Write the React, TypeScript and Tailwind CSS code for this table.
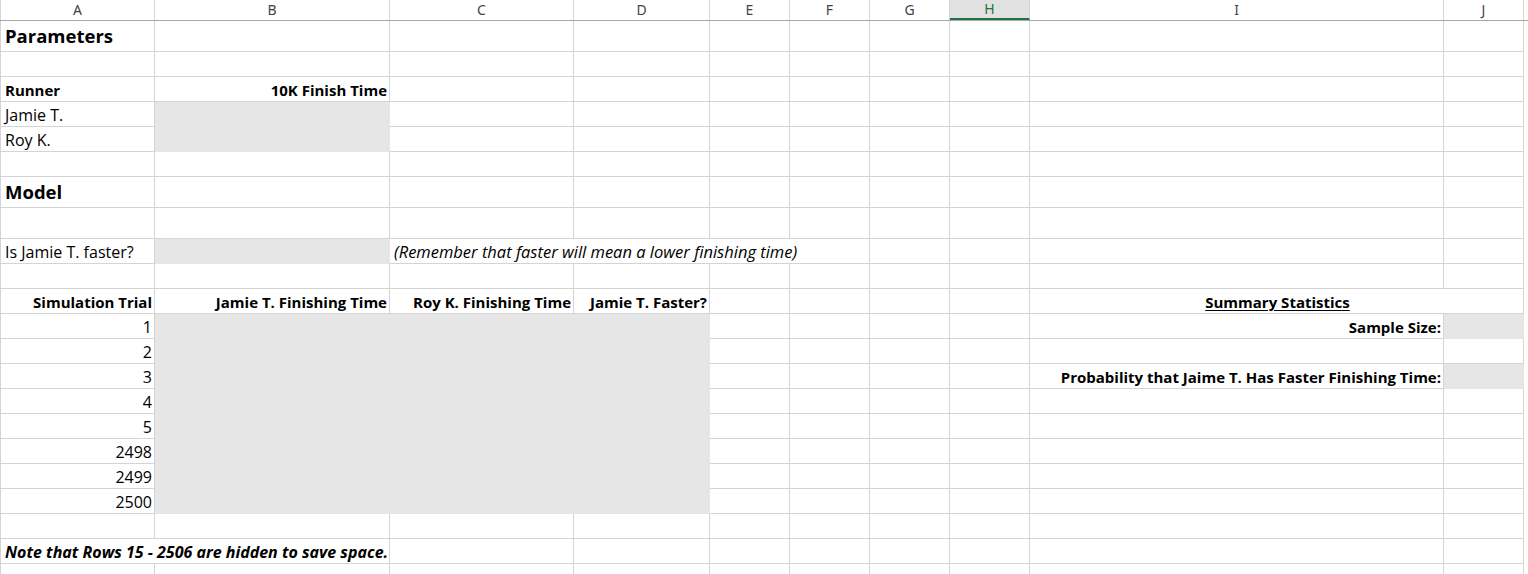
import React from 'react';

type Cell = {
  text?: string;
  span?: 1 | 2 | 4;
  align?: 'left' | 'right' | 'center';
  bold?: boolean;
  italic?: boolean;
  underline?: boolean;
  fill?: boolean;
  big?: boolean;
};

type Row = { tall?: boolean; cells: Cell[] };

const letters = ['A', 'B', 'C', 'D', 'E', 'F', 'G', 'H', 'I', 'J'];

const spanClass = { 1: '', 2: 'col-span-2', 4: 'col-span-4' };
const alignClass = { left: 'justify-start', right: 'justify-end', center: 'justify-center' };

const blank = (n: number): Cell[] => Array.from({ length: n }, () => ({}));

const shaded: Cell = { fill: true };

const trialRow = (n: string, right: Cell[]): Row => ({
  cells: [{ text: n, align: 'right' }, shaded, shaded, shaded, ...blank(4), ...right],
});

const rows: Row[] = [
  { tall: true, cells: [{ text: 'Parameters', bold: true, big: true }, ...blank(9)] },
  { cells: blank(10) },
  { cells: [{ text: 'Runner', bold: true }, { text: '10K Finish Time', bold: true, align: 'right' }, ...blank(8)] },
  { cells: [{ text: 'Jamie T.' }, shaded, ...blank(8)] },
  { cells: [{ text: 'Roy K.' }, shaded, ...blank(8)] },
  { cells: blank(10) },
  { tall: true, cells: [{ text: 'Model', bold: true, big: true }, ...blank(9)] },
  { tall: true, cells: blank(10) },
  {
    cells: [
      { text: 'Is Jamie T. faster?' },
      shaded,
      { text: '(Remember that faster will mean a lower finishing time)', italic: true, span: 4 },
      ...blank(4),
    ],
  },
  { cells: blank(10) },
  {
    cells: [
      { text: 'Simulation Trial', bold: true, align: 'right' },
      { text: 'Jamie T. Finishing Time', bold: true, align: 'right' },
      { text: 'Roy K. Finishing Time', bold: true, align: 'right' },
      { text: 'Jamie T. Faster?', bold: true, align: 'right' },
      ...blank(4),
      { text: 'Summary Statistics', bold: true, underline: true, align: 'center', span: 2 },
    ],
  },
  trialRow('1', [{ text: 'Sample Size:', bold: true, align: 'right' }, shaded]),
  trialRow('2', blank(2)),
  trialRow('3', [{ text: 'Probability that Jaime T. Has Faster Finishing Time:', bold: true, align: 'right' }, shaded]),
  trialRow('4', blank(2)),
  trialRow('5', blank(2)),
  trialRow('2498', blank(2)),
  trialRow('2499', blank(2)),
  trialRow('2500', blank(2)),
  { cells: blank(10) },
  {
    cells: [
      { text: 'Note that Rows 15 - 2506 are hidden to save space.', bold: true, italic: true, span: 2 },
      ...blank(8),
    ],
  },
  { cells: blank(10) },
];

const gridCols = 'grid grid-cols-[154px_235px_184px_136px_80px_80px_80px_80px_414px_80px]';

// text size per style, so widths line up with the original Calibri cells
const textClass = (c: Cell) => {
  if (c.big) return 'pb-[4px] text-[18.5px] leading-[22px] font-bold';
  if (c.bold && c.italic) return 'pb-[2px] text-[16px] leading-[18px] font-bold italic';
  if (c.bold) return 'pb-[2px] text-[15px] leading-[18px] font-bold';
  if (c.italic) return 'pb-[2px] text-[16.5px] leading-[18px] italic';
  return 'pb-[2px] text-[16px] leading-[18px]';
};

export default function App() {
  return (
    <div className="w-[1528px] h-[574px] overflow-hidden bg-white font-['Open_Sans',sans-serif] text-black">
      <div className="flex border-b border-[#a8a8a8]">
        <div className={`${gridCols} border-l border-[#d4d4d4]`}>
          {letters.map(l => (
            <div
              key={l}
              className={
                l === 'H'
                  ? "flex h-[20px] items-center justify-center border-r border-b-2 border-r-[#d4d4d4] border-b-[#217346] bg-[#e1e1e1] font-['Noto_Sans',sans-serif] text-[14px] leading-none text-[#217346] -mb-px"
                  : "flex h-[20px] items-center justify-center border-r border-[#d4d4d4] font-['Noto_Sans',sans-serif] text-[14px] leading-none text-[#444]"
              }
            >
              {l}
            </div>
          ))}
        </div>
      </div>

      <div className="w-[1524px] border-l border-[#d4d4d4]">
        {rows.map((row, ri) => (
          <div key={ri} className={gridCols}>
            {row.cells.map((c, ci) => (
              <div
                key={ci}
                className={[
                  'flex items-end whitespace-nowrap border-r border-b pl-[4px] pr-[2px]',
                  row.tall ? 'h-[31px]' : 'h-[25px]',
                  c.fill ? 'bg-[#e6e6e6] border-[#e6e6e6]' : 'border-[#d4d4d4]',
                  spanClass[c.span ?? 1],
                  alignClass[c.align ?? 'left'],
                  textClass(c),
                ].join(' ')}
              >
                {c.text && (
                  <span className={c.underline ? 'underline underline-offset-2' : ''}>{c.text}</span>
                )}
              </div>
            ))}
          </div>
        ))}
      </div>
    </div>
  );
}
